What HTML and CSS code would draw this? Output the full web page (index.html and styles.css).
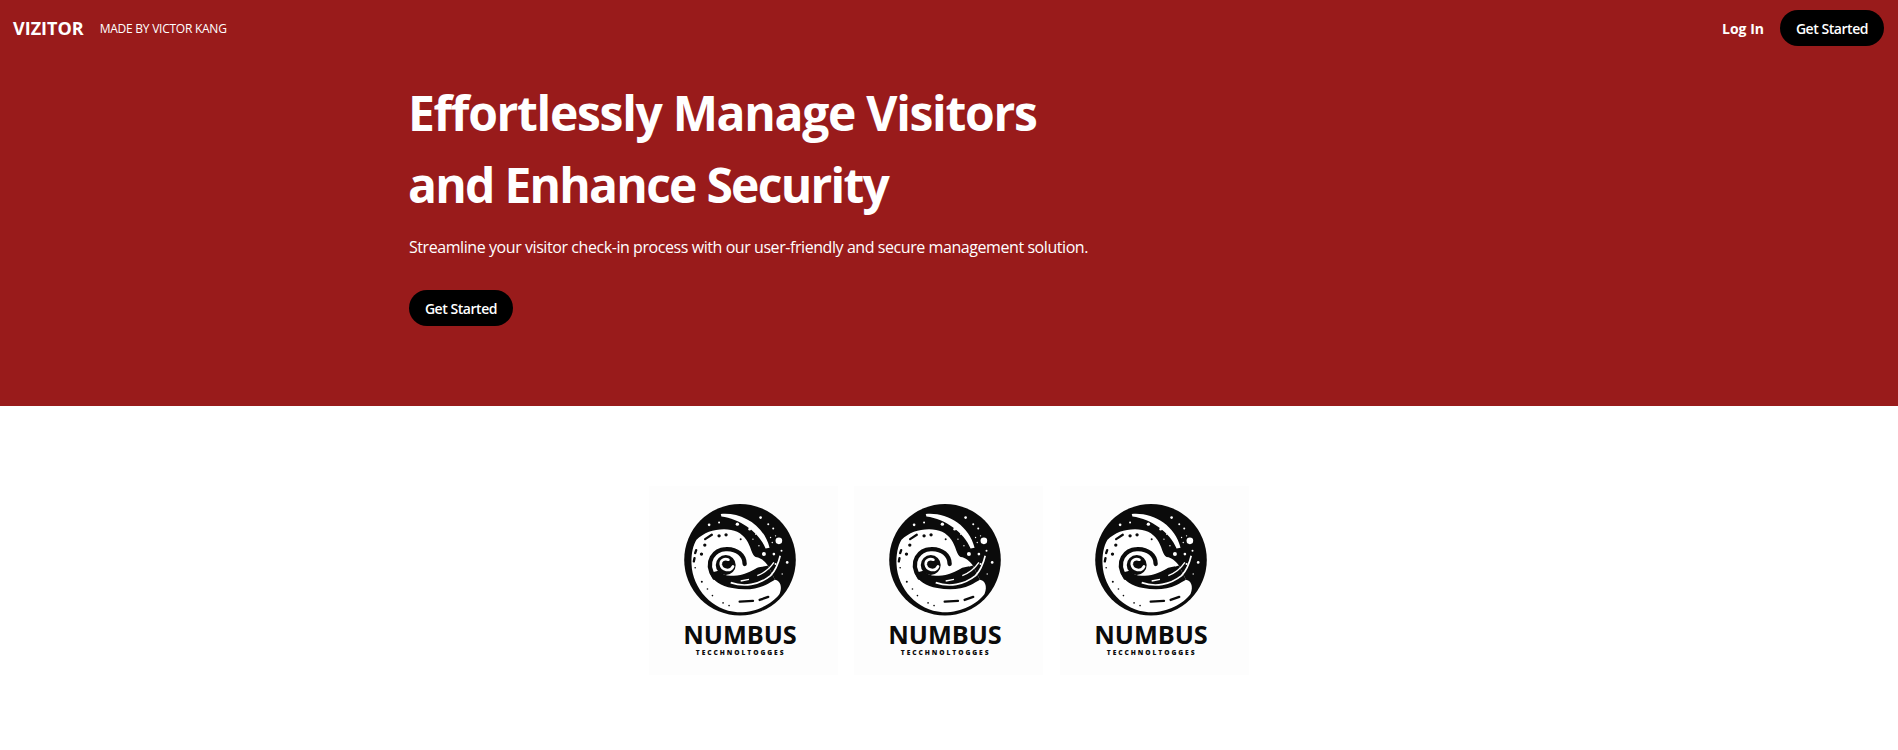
FILE: index.html
```html
<!DOCTYPE html>
<html lang="en">
<head>
<meta charset="utf-8">
<title>Vizitor</title>
<link rel="stylesheet" href="styles.css">
</head>
<body>
<svg class="defs" width="0" height="0" aria-hidden="true">
  <symbol id="mark" viewBox="-81 -27 570 570">
    <rect x="-81" y="-27" width="570" height="570" fill="#fdfdfd"/>
    <g transform="translate(0 3)">
    <circle cx="193" cy="192" r="168" fill="#0b0b0b"/>
    <path fill="#fff" d="M62 132C84 110 112 100 145 100C175 100 198 110 212 132C226 152 228 178 240 184C256 186 266 196 277 209L298 252C312 254 322 270 312 295C290 325 240 352 185 350C110 345 50 280 47 205C46 178 50 152 62 132Z"/>
    <path fill="#0b0b0b" d="M102 232C112 255 135 272 170 277C205 284 240 282 270 268C280 263 290 256 298 252L277 209C262 214 255 212 245 216C228 226 215 232 205 235C190 240 178 240 165 240C150 240 138 236 128 225Z"/>
    <path fill="none" stroke="#0b0b0b" stroke-width="13" stroke-linecap="round" d="M116 246C82 196 118 161 150 160C185 158 207 180 207 205"/>
    <circle cx="150" cy="208" r="30" fill="#0b0b0b"/>
    <path fill="none" stroke="#fff" stroke-width="8" stroke-linecap="round" d="M172 212C164 230 138 224 135 206C134 194 146 187 158 192"/>
    <path fill="none" stroke="#fff" stroke-width="5" d="M165 261C205 275 250 268 285 240C298 226 308 205 314 180"/>
    <path fill="none" stroke="#fff" stroke-width="4" d="M195 256L220 251M245 240C265 232 283 218 295 200"/>
    <path fill="#fff" d="M135 54C195 48 265 85 282 156L270 158C250 110 195 70 137 62Z"/>
    <g fill="#fff">
      <circle cx="100" cy="87" r="4"/><circle cx="130" cy="80" r="3"/><circle cx="185" cy="85" r="5"/>
      <circle cx="222" cy="100" r="4"/><circle cx="255" cy="65" r="4"/><circle cx="278" cy="85" r="3"/>
      <circle cx="293" cy="98" r="3"/><circle cx="310" cy="135" r="10"/><circle cx="265" cy="175" r="6"/>
      <circle cx="290" cy="140" r="2"/><circle cx="295" cy="175" r="4"/><circle cx="335" cy="200" r="4"/>
      <circle cx="318" cy="165" r="3"/><circle cx="250" cy="150" r="2"/><circle cx="232" cy="130" r="2"/>
      <circle cx="240" cy="115" r="2"/><circle cx="285" cy="125" r="2"/><circle cx="300" cy="120" r="2"/>
      <circle cx="320" cy="235" r="2"/><circle cx="300" cy="205" r="3"/>
    </g>
    <g fill="#0b0b0b">
      <circle cx="130" cy="120" r="5"/><circle cx="151" cy="117" r="5"/><circle cx="195" cy="130" r="3"/>
      <circle cx="87" cy="148" r="5"/><circle cx="77" cy="175" r="5"/><circle cx="58" cy="216" r="2.5"/>
      <circle cx="78" cy="258" r="3"/><circle cx="95" cy="280" r="2.5"/><circle cx="110" cy="300" r="2.5"/>
      <circle cx="142" cy="322" r="2.5"/><circle cx="160" cy="330" r="2.5"/>
    </g>
    <path fill="none" stroke="#0b0b0b" stroke-width="7" stroke-linecap="round" d="M88 130L108 117M61 163L58 172M56 187L54 197M192 318L232 316M252 313L278 304"/>
    </g>
  </symbol>
</svg>

<section class="hero">
  <header class="nav">
    <div class="nav-left">
      <a class="brand">VIZITOR</a>
      <span class="tagline">MADE BY VICTOR KANG</span>
    </div>
    <div class="nav-right">
      <a class="login">Log In</a>
      <a class="btn">Get Started</a>
    </div>
  </header>
  <div class="hero-inner">
    <h1>Effortlessly Manage Visitors<br><span class="h1-second">and Enhance Security</span></h1>
    <p>Streamline your visitor check-in process with our user-friendly and secure management solution.</p>
    <a class="btn">Get Started</a>
  </div>
</section>

<section class="logos">
  <svg class="logo" viewBox="-81 -27 570 570" role="img" aria-label="Numbus logo">
    <use href="#mark" x="-81" y="-27" width="570" height="570"/>
    <text class="logo-name" x="22" y="450" textLength="342" lengthAdjust="spacingAndGlyphs">NUMBUS</text>
    <text class="logo-sub" x="60" y="482" textLength="264" lengthAdjust="spacing">TECCHNOLTOGGES</text>
  </svg>
  <svg class="logo" viewBox="-81 -27 570 570" role="img" aria-label="Numbus logo">
    <use href="#mark" x="-81" y="-27" width="570" height="570"/>
    <text class="logo-name" x="22" y="450" textLength="342" lengthAdjust="spacingAndGlyphs">NUMBUS</text>
    <text class="logo-sub" x="60" y="482" textLength="264" lengthAdjust="spacing">TECCHNOLTOGGES</text>
  </svg>
  <svg class="logo" viewBox="-81 -27 570 570" role="img" aria-label="Numbus logo">
    <use href="#mark" x="-81" y="-27" width="570" height="570"/>
    <text class="logo-name" x="22" y="450" textLength="342" lengthAdjust="spacingAndGlyphs">NUMBUS</text>
    <text class="logo-sub" x="60" y="482" textLength="264" lengthAdjust="spacing">TECCHNOLTOGGES</text>
  </svg>
</section>
</body>
</html>
```
FILE: styles.css
```css
* { box-sizing: border-box; }
html, body { margin: 0; overflow: hidden; }
body {
  background: #fff;
  font-family: "Open Sans", "Noto Sans", sans-serif;
  font-variant-ligatures: none;
  color: #fff;
}
.defs { position: absolute; }
.hero {
  background: #991b1b;
  padding-bottom: 80px;
}
.nav {
  display: flex;
  align-items: center;
  justify-content: space-between;
  height: 56px;
  padding: 0 14px 0 13px;
}
.nav-left { display: flex; align-items: center; gap: 16px; }
.nav-right { display: flex; align-items: center; gap: 16px; }
.brand { font-size: 18px; font-weight: 700; }
.tagline { font-size: 12px; letter-spacing: -0.25px; }
.login { font-size: 14px; font-weight: 700; }
.btn {
  display: inline-flex;
  align-items: center;
  justify-content: center;
  width: 104px;
  height: 36px;
  border-radius: 18px;
  background: #000;
  color: #fff;
  font-size: 14px;
  font-weight: 600;
  letter-spacing: -0.45px;
}
.hero-inner {
  max-width: 1080px;
  margin: 0 auto;
  padding-top: 21px;
}
h1 {
  margin: 0 0 0 -1px;
  font-size: 48px;
  font-weight: 700;
  line-height: 72px;
  letter-spacing: -1.3px;
}
.h1-second { letter-spacing: -1.75px; }
p {
  margin: 14px 0 31px;
  font-size: 16px;
  line-height: 24px;
  letter-spacing: -0.43px;
}
.logos {
  display: grid;
  grid-template-columns: repeat(3, 1fr);
  gap: 16px;
  width: 600px;
  margin: 80px auto 0;
}
.logo { width: 100%; aspect-ratio: 1; display: block; }
.logo-name {
  font-family: "Open Sans", sans-serif;
  font-weight: 700;
  font-size: 74px;
  fill: #0b0b0b;
}
.logo-sub {
  font-family: "Open Sans", sans-serif;
  font-weight: 800;
  font-size: 20px;
  fill: #0b0b0b;
}
```
